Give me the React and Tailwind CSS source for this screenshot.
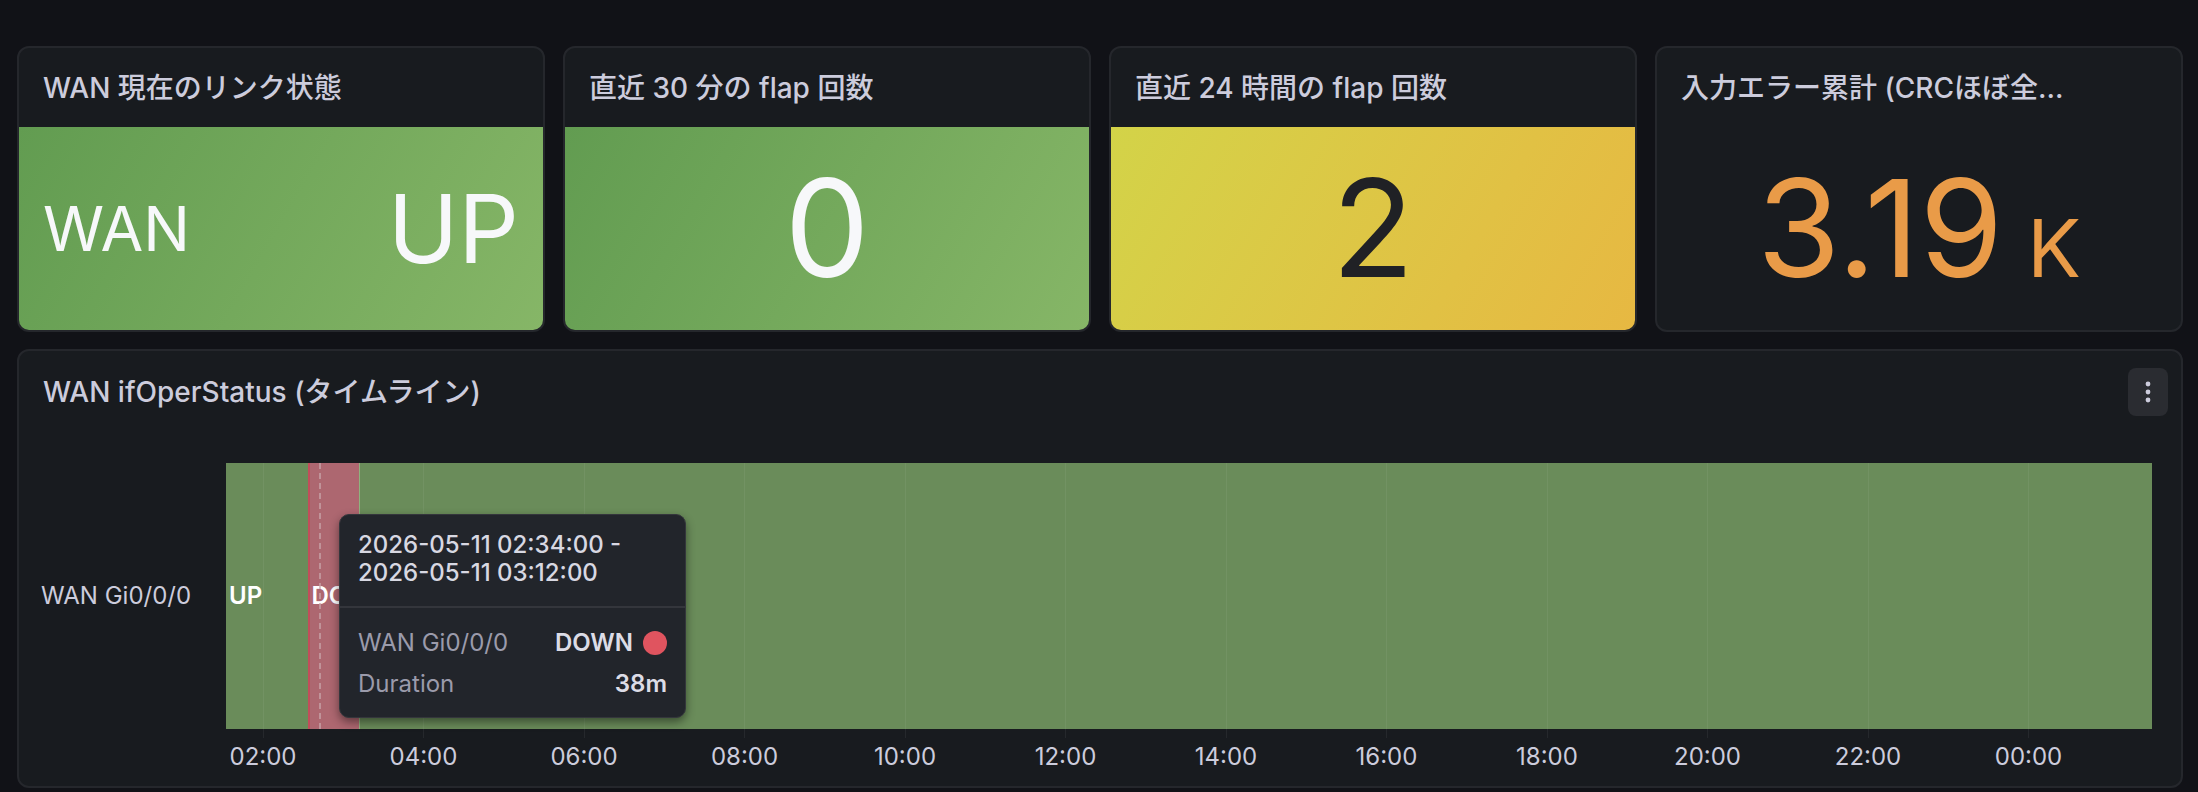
import React from 'react'

const ticks = ['02:00', '04:00', '06:00', '08:00', '10:00', '12:00', '14:00', '16:00', '18:00', '20:00', '22:00', '00:00']
// 24h range, first tick at 1.921% of the bar
const tickPct = (i) => 1.921 + i * (100 / 12)

const StatPanel = ({ title, children, bodyClass }) => (
  <div className="flex flex-col overflow-hidden rounded-[12px] border-2 border-[#25272c] bg-[#181b1f]">
    <div className="flex h-[79px] shrink-0 items-center px-[24px]">
      <span className="truncate text-[28px] font-medium text-[#ccccdc]">{title}</span>
    </div>
    <div className={`flex flex-1 items-center ${bodyClass}`}>{children}</div>
  </div>
)

const Tooltip = () => (
  <div className="absolute left-[113px] top-[51px] z-10 w-[347px] rounded-[10px] border border-[#34363c] bg-[#22252b] shadow-[0_4px_10px_rgba(0,0,0,0.45)]">
    <div className="px-[18px] pt-[16px] pb-[19px] text-[24px] font-medium leading-[28px] text-[#d8d8e2]">
      <div>2026-05-11 02:34:00 -</div>
      <div>2026-05-11 03:12:00</div>
    </div>
    <div className="border-t-2 border-[#34363c]" />
    <div className="flex flex-col gap-[13px] px-[18px] pt-[21px] pb-[19px] text-[24px] leading-[28px]">
      <div className="flex items-center justify-between">
        <span className="text-[#9b9bab]">WAN Gi0/0/0</span>
        <span className="flex items-center gap-[10px] font-semibold text-[#dcdce6]">
          DOWN
          <span className="h-[24px] w-[24px] rounded-full bg-[#e0545f]" />
        </span>
      </div>
      <div className="flex items-center justify-between">
        <span className="text-[#9b9bab]">Duration</span>
        <span className="font-semibold text-[#dcdce6]">38m</span>
      </div>
    </div>
  </div>
)

const Timeline = () => (
  <div className="rounded-[12px] border-2 border-[#25272c] bg-[#181b1f] h-[439px] flex flex-col">
    <div className="flex h-[82px] shrink-0 items-center justify-between pl-[24px] pr-[13px]">
      <span className="text-[28px] font-medium text-[#ccccdc]">WAN ifOperStatus (タイムライン)</span>
      <button className="flex h-[48px] w-[40px] items-center justify-center rounded-[8px] bg-[#2a2c31]">
        <svg width="6" height="22" viewBox="0 0 6 22" fill="#ccccdc">
          <circle cx="3" cy="3" r="2.4" />
          <circle cx="3" cy="11" r="2.4" />
          <circle cx="3" cy="19" r="2.4" />
        </svg>
      </button>
    </div>
    <div className="flex flex-col pl-[22px] pr-[29px] pt-[30px]">
      <div className="flex h-[266px]">
        <div className="flex w-[185px] shrink-0 items-center text-[24px] text-[#ccccdc]">WAN Gi0/0/0</div>
        <div className="relative flex-1 bg-[#6a8c5a]">
          {ticks.map((t, i) => (
            <div
              key={t}
              className="absolute top-0 bottom-[-9px] w-px bg-white/[0.06]"
              style={{ left: `${tickPct(i)}%` }}
            />
          ))}
          <div className="absolute inset-y-0 left-0 flex items-center pl-[3px] text-[24px] font-semibold text-white">UP</div>
          <div
            className="absolute inset-y-0 flex items-center overflow-hidden border-l-2 border-[#c24d5b] bg-[#ad6770] pl-[1px] text-[24px] font-semibold text-white"
            style={{ left: '4.282%', width: '2.639%' }}
          >
            DOWN
          </div>
          <div className="absolute inset-y-0 w-px bg-[#8fb27e]" style={{ left: '6.921%' }} />
          <div
            className="absolute inset-y-0 border-l-2 border-dashed border-[#c8a7ab]/70"
            style={{ left: '4.83%' }}
          />
          <Tooltip />
        </div>
      </div>
      <div className="relative ml-[185px] h-[55px]">
        {ticks.map((t, i) => (
          <span
            key={t}
            className="absolute top-[16px] -translate-x-1/2 text-[24px] leading-[24px] text-[#ccccdc]"
            style={{ left: `${tickPct(i)}%` }}
          >
            {t}
          </span>
        ))}
      </div>
    </div>
  </div>
)

export default function App() {
  return (
    <div className="min-h-[792px] w-[2198px] bg-[#111217] pl-[17px] pr-[15px] pt-[46px] font-[Inter,'Noto_Sans_CJK_JP',sans-serif]">
      <div className="grid h-[286px] grid-cols-4 gap-[18px]">
        <StatPanel title="WAN 現在のリンク状態" bodyClass="justify-between px-[24px] bg-linear-120 from-[#629c51] to-[#86b667] text-[#f7f8fa]">
          <span className="text-[62px] leading-none">WAN</span>
          <span className="text-[95px] leading-none">UP</span>
        </StatPanel>
        <StatPanel title="直近 30 分の flap 回数" bodyClass="justify-center bg-linear-120 from-[#629c51] to-[#86b667] text-[#f7f8fa]">
          <span className="text-[135px] leading-none">0</span>
        </StatPanel>
        <StatPanel title="直近 24 時間の flap 回数" bodyClass="justify-center bg-linear-120 from-[#d3d348] to-[#e7b842] text-[#202125]">
          <span className="text-[135px] leading-none">2</span>
        </StatPanel>
        <StatPanel title="入力エラー累計 (CRCほぼ全..." bodyClass="justify-center text-[#e99b48]">
          <span className="flex items-baseline">
            <span className="text-[135px] leading-none">3.19</span>
            <span className="ml-[24px] text-[80px] leading-none">K</span>
          </span>
        </StatPanel>
      </div>
      <div className="mt-[17px]">
        <Timeline />
      </div>
    </div>
  )
}
